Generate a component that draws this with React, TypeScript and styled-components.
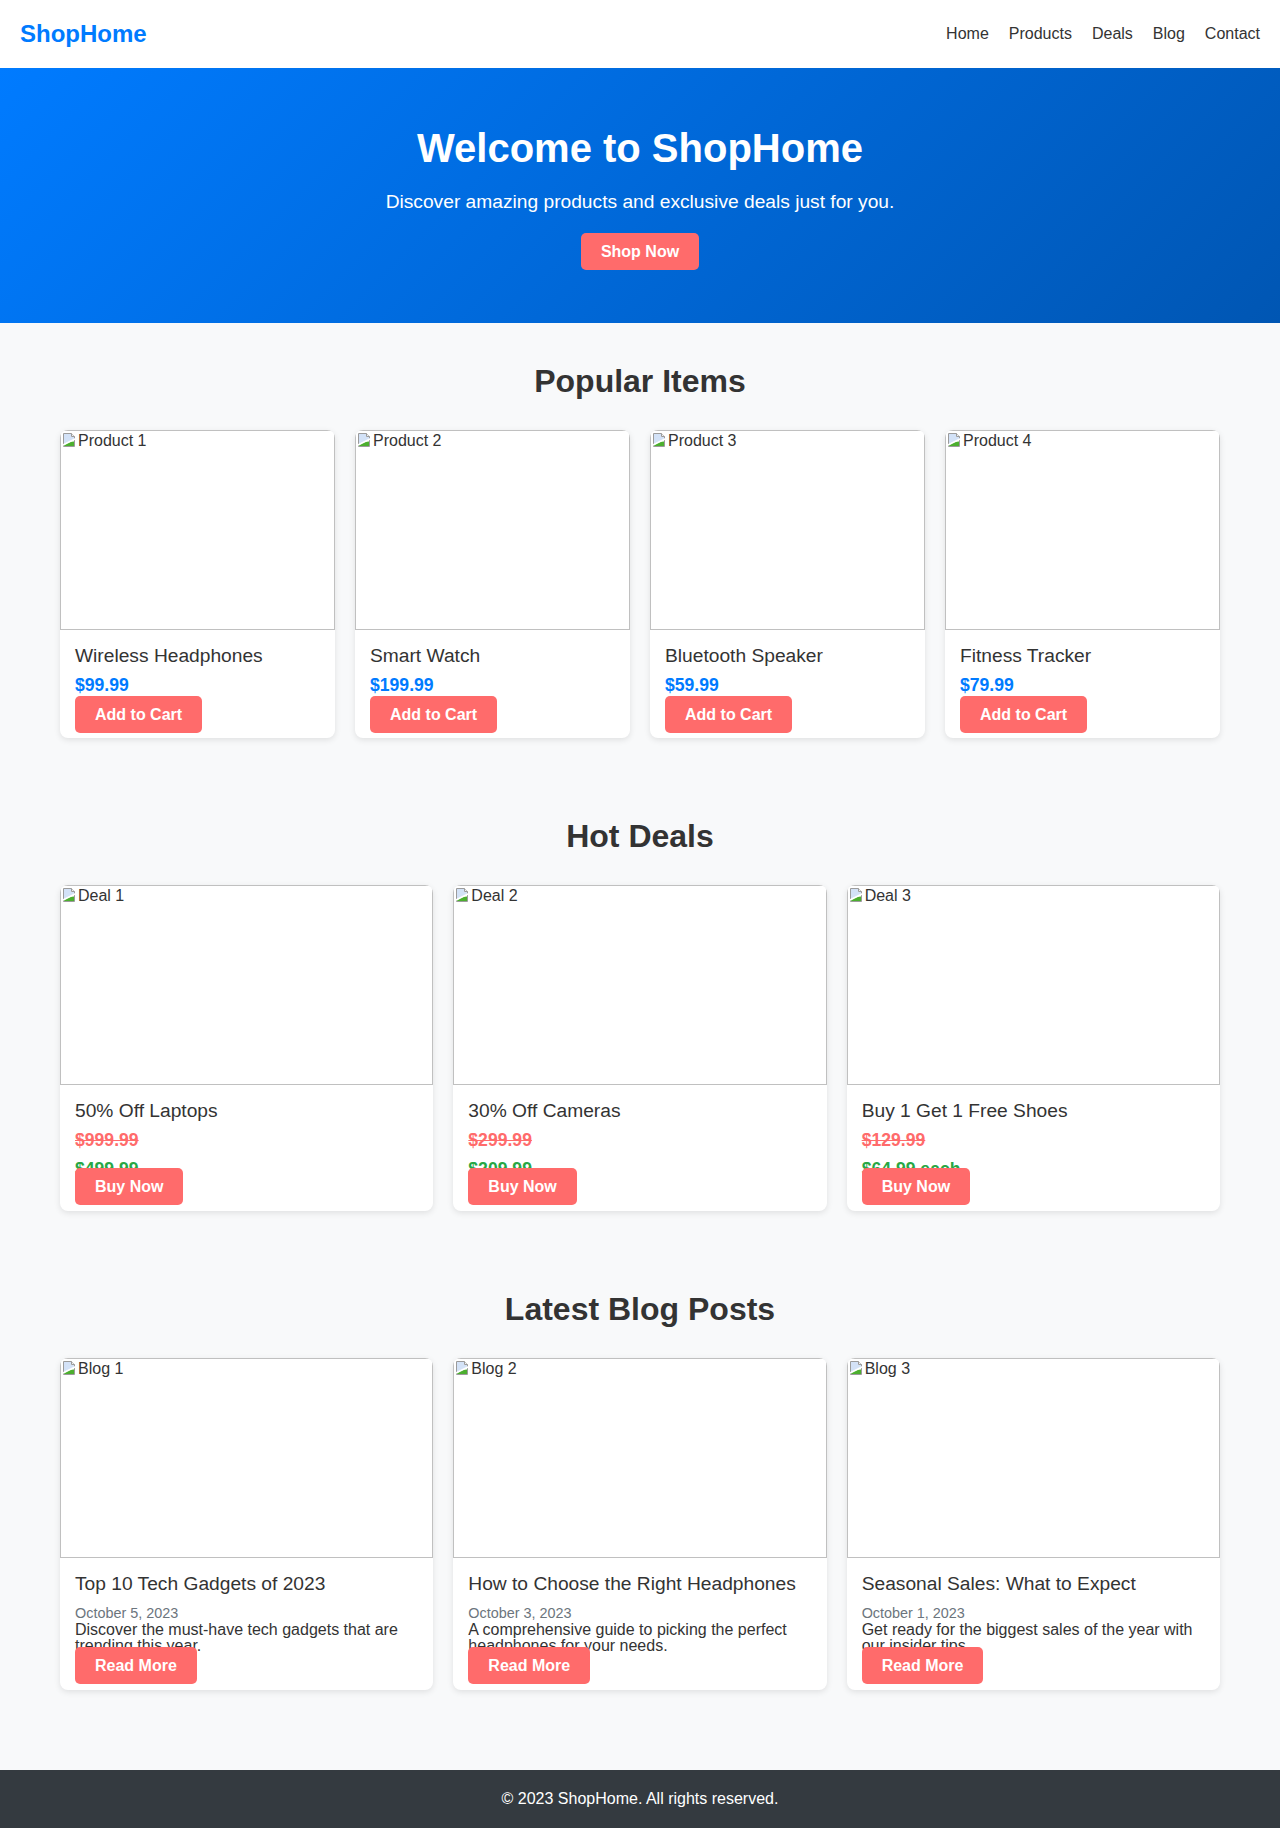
import React from "react";
import styled, { createGlobalStyle } from "styled-components";

const GlobalStyle = createGlobalStyle`
  * { box-sizing: border-box; }
  body {
    margin: 0;
    font-family: "Liberation Sans", Arial, sans-serif;
    background: #f8f9fa;
    color: #333;
  }
`;

const Header = styled.header`
  height: 68px;
  padding: 0 20px;
  background: #fff;
  display: flex;
  align-items: center;
  justify-content: space-between;
`;

const Logo = styled.h1`
  margin: 0;
  font-size: 24px;
  font-weight: bold;
  color: #007bff;
`;

const Nav = styled.nav`
  display: flex;
  gap: 20px;
`;

const NavLink = styled.a`
  font-size: 16px;
  color: #333;
  text-decoration: none;
`;

const Hero = styled.section`
  background: linear-gradient(135deg, #007bff, #0056b3);
  color: #fff;
  text-align: center;
  padding: 58px 20px 53px;
`;

const HeroTitle = styled.h2`
  margin: 0 0 20px;
  font-size: 40px;
  font-weight: bold;
`;

const HeroText = styled.p`
  margin: 0 0 20px;
  font-size: 19.2px;
`;

const Button = styled.a<{ $overlap?: number }>`
  display: inline-block;
  align-self: flex-start;
  background: #ff6b6b;
  color: #fff;
  font-size: 16px;
  font-weight: bold;
  line-height: 17px;
  padding: 10px 20px;
  border-radius: 5px;
  text-decoration: none;
  margin-top: ${(p) => (p.$overlap ? -p.$overlap : 0)}px;
  position: relative;
`;

const Main = styled.main`
  padding-bottom: 40px;
`;

const Section = styled.section`
  max-width: 1200px;
  margin: 0 auto;
  padding: 40px 20px;
`;

const SectionTitle = styled.h2`
  margin: 0 0 30px;
  font-size: 32px;
  font-weight: bold;
  text-align: center;
  color: #333;
`;

const Grid = styled.div<{ $cols: number }>`
  display: grid;
  grid-template-columns: repeat(${(p) => p.$cols}, 1fr);
  gap: 20px;
`;

const Card = styled.div`
  background: #fff;
  border-radius: 8px;
  overflow: hidden;
  box-shadow: 0 2px 6px rgba(0, 0, 0, 0.1);
  display: flex;
  flex-direction: column;
`;

const BrokenImage = styled.div`
  height: 200px;
  border: 1px solid #c0c0c0;
  padding: 1px;
  font-size: 16px;
  color: #333;
  display: flex;
  align-items: flex-start;
`;

const AltText = styled.span`
  line-height: 18px;
`;

const CardBody = styled.div<{ $bottom?: number }>`
  padding: 15px 15px ${(p) => p.$bottom ?? 6}px;
  display: flex;
  flex-direction: column;
`;

const CardTitle = styled.h3`
  margin: 0 0 8px;
  font-size: 19.2px;
  font-weight: normal;
  color: #333;
`;

const priceColors = { blue: "#007bff", old: "#ff6b6b", new: "#28a745" };

const Price = styled.p<{ $tone: "blue" | "old" | "new" }>`
  margin: 0 0 ${(p) => (p.$tone === "old" ? 8 : 0)}px;
  font-size: 17.6px;
  font-weight: bold;
  color: ${(p) => priceColors[p.$tone]};
  text-decoration: ${(p) => (p.$tone === "old" ? "line-through" : "none")};
`;

const PostDate = styled.p`
  margin: 2px 0 0;
  font-size: 14.4px;
  color: #6c757d;
`;

const PostText = styled.p`
  margin: 1px 0 0;
  font-size: 16px;
  line-height: 16px;
  color: #333;
`;

const Footer = styled.footer`
  background: #343a40;
  color: #fff;
  text-align: center;
  padding: 20px;
  font-size: 16px;
`;

const BrokenIcon = () => (
  <svg width="16" height="16" viewBox="0 0 16 16" style={{ flex: "none" }}>
    <path d="M1.5 1.5h8l3 3v10h-11z" fill="#fff" stroke="#9b9b9b" />
    <path d="M9.5 1.5v3h3" fill="#f0f0f0" stroke="#9b9b9b" />
    <path d="M2 2h7v3h3v2.5L2 12z" fill="#d3e2f7" />
    <path d="M2 14h10V9.5C8 9.5 5 11 2 13.5z" fill="#4caf2f" />
    <path d="M1 13L15 6" stroke="#fff" strokeWidth="1.6" />
  </svg>
);

const Placeholder = ({ alt }: { alt: string }) => (
  <BrokenImage>
    <BrokenIcon />
    <AltText>{alt}</AltText>
  </BrokenImage>
);

const products = [
  { name: "Wireless Headphones", price: "$99.99" },
  { name: "Smart Watch", price: "$199.99" },
  { name: "Bluetooth Speaker", price: "$59.99" },
  { name: "Fitness Tracker", price: "$79.99" },
];

const deals = [
  { name: "50% Off Laptops", old: "$999.99", now: "$499.99" },
  { name: "30% Off Cameras", old: "$299.99", now: "$209.99" },
  { name: "Buy 1 Get 1 Free Shoes", old: "$129.99", now: "$64.99 each" },
];

const posts = [
  {
    title: "Top 10 Tech Gadgets of 2023",
    date: "October 5, 2023",
    text: "Discover the must-have tech gadgets that are trending this year.",
  },
  {
    title: "How to Choose the Right Headphones",
    date: "October 3, 2023",
    text: "A comprehensive guide to picking the perfect headphones for your needs.",
  },
  {
    title: "Seasonal Sales: What to Expect",
    date: "October 1, 2023",
    text: "Get ready for the biggest sales of the year with our insider tips.",
  },
];

export default function App() {
  return (
    <>
      <GlobalStyle />
      <Header>
        <Logo>ShopHome</Logo>
        <Nav>
          {["Home", "Products", "Deals", "Blog", "Contact"].map((l) => (
            <NavLink key={l} href="#">
              {l}
            </NavLink>
          ))}
        </Nav>
      </Header>
      <Hero>
        <HeroTitle>Welcome to ShopHome</HeroTitle>
        <HeroText>Discover amazing products and exclusive deals just for you.</HeroText>
        <Button href="#">Shop Now</Button>
      </Hero>
      <Main>
        <Section>
          <SectionTitle>Popular Items</SectionTitle>
          <Grid $cols={4}>
            {products.map((p, i) => (
              <Card key={p.name}>
                <Placeholder alt={`Product ${i + 1}`} />
                <CardBody $bottom={5}>
                  <CardTitle>{p.name}</CardTitle>
                  <Price $tone="blue">{p.price}</Price>
                  <Button href="#">Add to Cart</Button>
                </CardBody>
              </Card>
            ))}
          </Grid>
        </Section>
        <Section>
          <SectionTitle>Hot Deals</SectionTitle>
          <Grid $cols={3}>
            {deals.map((d, i) => (
              <Card key={d.name}>
                <Placeholder alt={`Deal ${i + 1}`} />
                <CardBody>
                  <CardTitle>{d.name}</CardTitle>
                  <Price $tone="old">{d.old}</Price>
                  <Price $tone="new">{d.now}</Price>
                  <Button href="#" $overlap={12}>
                    Buy Now
                  </Button>
                </CardBody>
              </Card>
            ))}
          </Grid>
        </Section>
        <Section>
          <SectionTitle>Latest Blog Posts</SectionTitle>
          <Grid $cols={3}>
            {posts.map((b, i) => (
              <Card key={b.title}>
                <Placeholder alt={`Blog ${i + 1}`} />
                <CardBody>
                  <CardTitle>{b.title}</CardTitle>
                  <PostDate>{b.date}</PostDate>
                  <PostText>{b.text}</PostText>
                  <Button href="#" $overlap={7}>
                    Read More
                  </Button>
                </CardBody>
              </Card>
            ))}
          </Grid>
        </Section>
      </Main>
      <Footer>© 2023 ShopHome. All rights reserved.</Footer>
    </>
  );
}
